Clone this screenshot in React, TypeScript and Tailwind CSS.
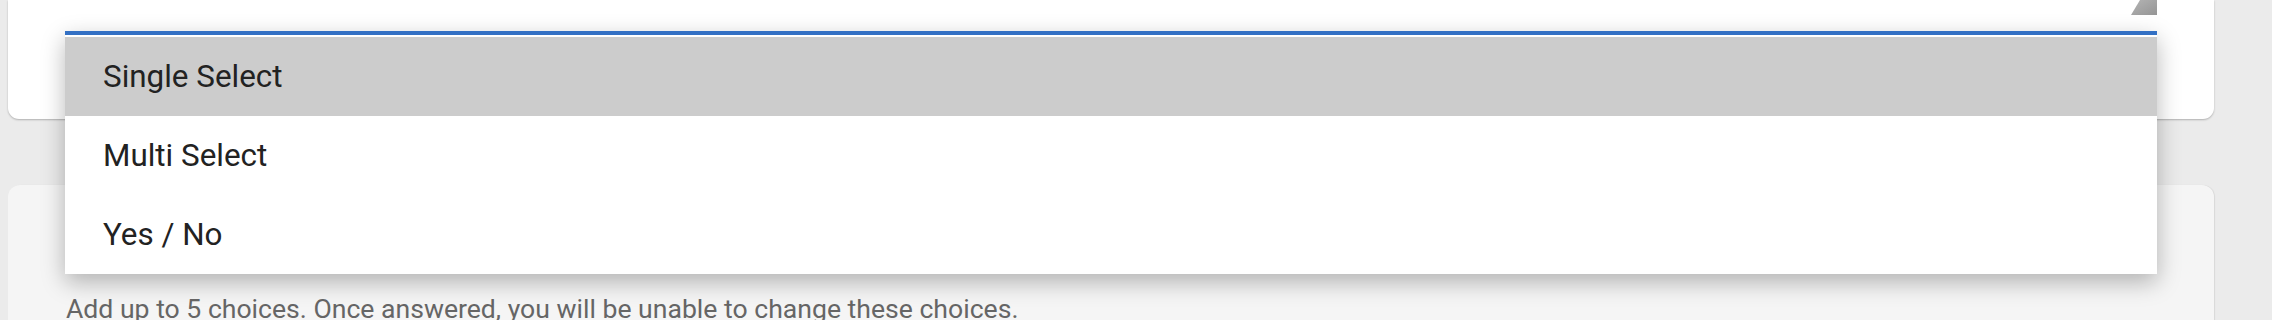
import React from 'react'

const options = ['Single Select', 'Multi Select', 'Yes / No']

function ResizeGrip() {
  return (
    <svg width="26" height="15" viewBox="0 0 26 15" className="block">
      <defs>
        <linearGradient id="grip" x1="0" y1="0" x2="1" y2="1">
          <stop offset="0" stopColor="#b4b4b4" />
          <stop offset="1" stopColor="#959595" />
        </linearGradient>
      </defs>
      <polygon points="0,15 26,15 26,0 9,0" fill="url(#grip)" />
    </svg>
  )
}

export default function App() {
  return (
    <div
      className="relative h-[320px] w-full overflow-hidden bg-[#ebebeb]"
      style={{ fontFamily: 'Roboto, "Liberation Sans", sans-serif' }}
    >
      {/* Question card (top part cut off) */}
      <div className="ml-2 mr-[58px] h-[119px] rounded-b-[11px] bg-white shadow-[0_1px_2px_rgba(0,0,0,0.25)]">
        <div className="ml-[57px] mr-[57px] flex h-[15px] justify-end">
          <ResizeGrip />
        </div>
      </div>

      {/* Choices card */}
      <div className="ml-2 mr-[58px] mt-[66px] h-[200px] rounded-t-[12px] bg-[#f5f5f5] px-[58px] pt-[109px] shadow-[1px_0_1px_rgba(0,0,0,0.08)]">
        <p className="whitespace-nowrap text-[26.6px] leading-[30px] text-[#666666]">
          Add up to 5 choices. Once answered, you will be unable to change these choices.
        </p>
      </div>

      {/* Open type dropdown */}
      <div className="absolute left-[65px] top-[31px] w-[2092px] border-t-4 border-[#3370c4] bg-white pt-[2px] shadow-[0_8px_22px_rgba(0,0,0,0.28)]">
        <ul>
          {options.map((opt, i) => (
            <li
              key={opt}
              className={
                'flex h-[79px] items-center pl-[38px] text-[31.4px] text-[#222222] ' +
                (i === 0 ? 'bg-[#cccccc]' : 'bg-white')
              }
            >
              {opt}
            </li>
          ))}
        </ul>
      </div>
    </div>
  )
}
